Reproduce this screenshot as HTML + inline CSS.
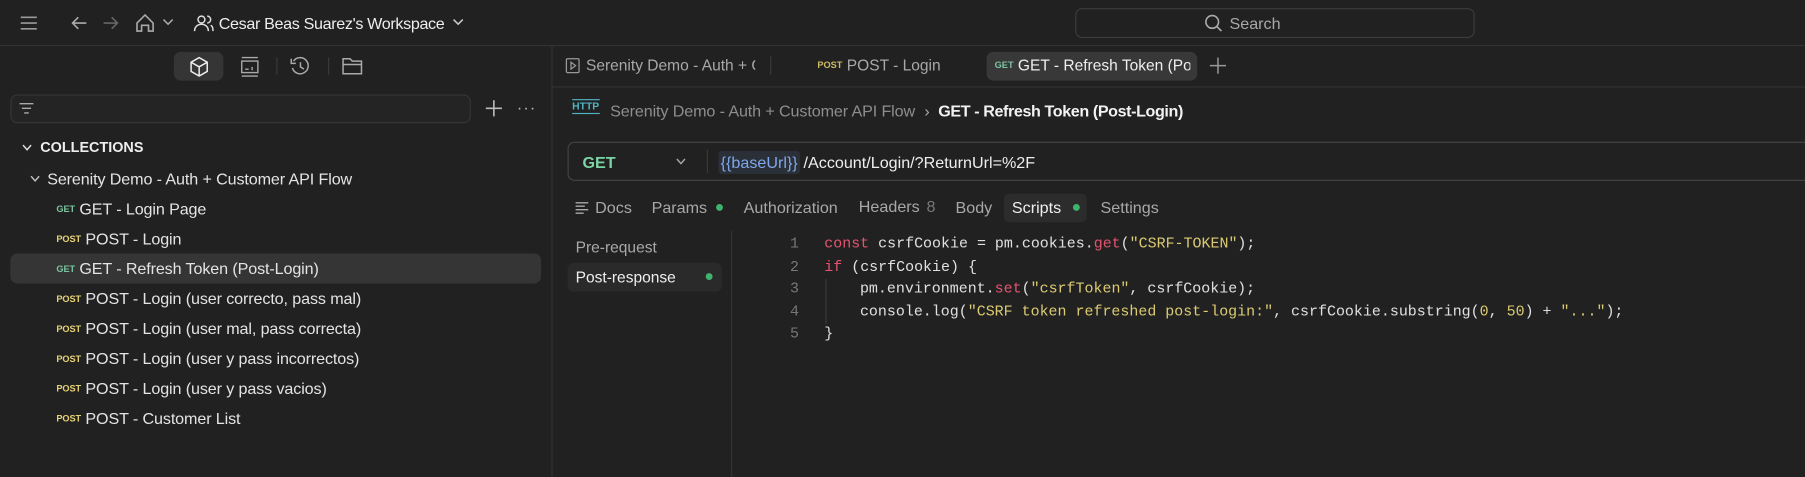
<!DOCTYPE html>
<html><head><meta charset="utf-8"><style>
*{margin:0;padding:0;box-sizing:border-box}
html,body{width:1805px;height:477px;overflow:hidden;background:#212121}
#w{width:1568px;height:414px;transform:scale(1.1512,1.1522);transform-origin:0 0;position:relative;font-family:"Liberation Sans",sans-serif;color:#e4e4e4;font-size:14px;background:#212121}
.a{position:absolute;white-space:nowrap}
.m{color:#a8a8a8}
.get{color:#7cc4a0;font-size:8px;font-weight:bold;vertical-align:2px}
.post{color:#e6d275;font-size:8px;font-weight:bold;vertical-align:2px}
.code{font-family:"Liberation Mono",monospace;font-size:13px;color:#e0e0e0}
.k{color:#e5536f}.s{color:#dccb72}.n{color:#dccb72}
.ln{color:#777;font-family:"Liberation Mono",monospace;font-size:13px;width:20px;text-align:right}
.dot{width:6px;height:6px;border-radius:50%;background:#3fb36e}
svg{position:absolute}
.it{letter-spacing:-0.1px}
</style></head><body><div id="w">
<div class="a" style="left:0;top:39px;width:1568px;height:1px;background:#333"></div>
<svg style="left:17px;top:13px" width="16" height="14" stroke="#999" stroke-width="1.4"><path d="M1 2h14M1 7h14M1 12h14"/></svg>
<svg style="left:61px;top:12px" width="16" height="16" fill="none" stroke="#aaa" stroke-width="1.4"><path d="M14 8H2M7 3L2 8l5 5"/></svg>
<svg style="left:88px;top:12px" width="16" height="16" fill="none" stroke="#666" stroke-width="1.4"><path d="M2 8h12M9 3l5 5-5 5"/></svg>
<svg style="left:117px;top:11px" width="18" height="18" fill="none" stroke="#aaa" stroke-width="1.4"><path d="M2 9L9 2l7 7v7h-4v-5H6v5H2z"/></svg>
<svg style="left:141px;top:15px" width="10" height="8" fill="none" stroke="#aaa" stroke-width="1.3"><path d="M1 2l4 4 4-4"/></svg>
<svg style="left:168px;top:11px" width="18" height="18" fill="none" stroke="#ddd" stroke-width="1.3"><circle cx="7" cy="6" r="3"/><path d="M1 16c0-4 3-6 6-6s6 2 6 6M12 3a3 3 0 010 6M15 11c2 1 2 3 2 5"/></svg>
<div class="a" style="left:190px;top:12px;font-size:14px;letter-spacing:-0.3px;color:#eee">Cesar Beas Suarez's Workspace</div>
<svg style="left:393px;top:15px" width="10" height="8" fill="none" stroke="#ccc" stroke-width="1.3"><path d="M1 2l4 4 4-4"/></svg>
<div class="a" style="left:934px;top:7px;width:347px;height:26px;border:1px solid #3c3c3c;border-radius:6px"></div>
<svg style="left:1046px;top:12px" width="16" height="16" fill="none" stroke="#aaa" stroke-width="1.4"><circle cx="7" cy="7" r="5.5"/><path d="M11 11l4 4"/></svg>
<div class="a m" style="left:1068px;top:12px;font-size:14px">Search</div>
<div class="a" style="left:479px;top:40px;width:1px;height:374px;background:#333"></div>
<div class="a" style="left:151px;top:45px;width:43px;height:25px;background:#353535;border-radius:6px"></div>
<svg style="left:164px;top:49px" width="18" height="18" fill="none" stroke="#eee" stroke-width="1.3"><path d="M9 1l7 4v8l-7 4-7-4V5zM2 5l7 4 7-4M9 9v8"/></svg>
<svg style="left:208px;top:49px" width="18" height="18" fill="none" stroke="#aaa" stroke-width="1.2"><path d="M2 1h14M2 17h14"/><rect x="2" y="4" width="14" height="10"/><path d="M5 11h3M11 9v3"/></svg>
<div class="a" style="left:240px;top:50px;width:1px;height:15px;background:#3a3a3a"></div>
<svg style="left:252px;top:49px" width="18" height="18" fill="none" stroke="#aaa" stroke-width="1.3"><path d="M3 4a7 7 0 11-1 6M1 2v4h4M9 5v4l3 2"/></svg>
<div class="a" style="left:285px;top:50px;width:1px;height:15px;background:#3a3a3a"></div>
<svg style="left:297px;top:49px" width="18" height="16" fill="none" stroke="#aaa" stroke-width="1.3"><path d="M1 2h6l2 2h8v11H1zM1 7h16"/></svg>
<div class="a" style="left:9px;top:82px;width:400px;height:25px;border:1px solid #363636;border-radius:6px;background:#242424"></div>
<svg style="left:16px;top:88px" width="14" height="12" stroke="#aaa" stroke-width="1.2"><path d="M1 2h12M3 6h8M5 10h4"/></svg>
<svg style="left:421px;top:86px" width="16" height="16" stroke="#bbb" stroke-width="1.4"><path d="M8 1v14M1 8h14"/></svg>
<div class="a" style="left:449px;top:85px;color:#bbb;font-size:14px;letter-spacing:1px">···</div>
<svg style="left:19px;top:125px" width="9" height="7" fill="none" stroke="#ddd" stroke-width="1.3"><path d="M1 1l3.5 4L8 1"/></svg>
<div class="a" style="left:35px;top:121px;font-size:12.5px;font-weight:bold;color:#eee">COLLECTIONS</div>
<svg style="left:26px;top:152px" width="9" height="7" fill="none" stroke="#bbb" stroke-width="1.3"><path d="M1 1l3.5 4L8 1"/></svg>
<div class="a it" style="left:41px;top:147px">Serenity Demo - Auth + Customer API Flow</div>
<div class="a" style="left:9px;top:220px;width:461px;height:26px;background:#353535;border-radius:6px"></div>
<div class="a it" style="left:49px;top:173px"><span class="get">GET</span> GET - Login Page</div>
<div class="a it" style="left:49px;top:199px"><span class="post">POST</span> POST - Login</div>
<div class="a it" style="left:49px;top:225px"><span class="get">GET</span> GET - Refresh Token (Post-Login)</div>
<div class="a it" style="left:49px;top:251px"><span class="post">POST</span> POST - Login (user correcto, pass mal)</div>
<div class="a it" style="left:49px;top:277px"><span class="post">POST</span> POST - Login (user mal, pass correcta)</div>
<div class="a it" style="left:49px;top:303px"><span class="post">POST</span> POST - Login (user y pass incorrectos)</div>
<div class="a it" style="left:49px;top:329px"><span class="post">POST</span> POST - Login (user y pass vacios)</div>
<div class="a it" style="left:49px;top:355px"><span class="post">POST</span> POST - Customer List</div>
<div class="a" style="left:480px;top:75px;width:1088px;height:1px;background:#333"></div>
<svg style="left:491px;top:50px" width="13" height="14" fill="none" stroke="#999" stroke-width="1.1"><rect x="1" y="1" width="11" height="12" rx="1"/><path d="M5 4l4 3-4 3z"/></svg>
<div class="a m" style="left:509px;top:49px;width:147px;overflow:hidden;font-size:13.5px">Serenity Demo - Auth + Customer</div>
<div class="a" style="left:669px;top:49px;width:1px;height:16px;background:#3a3a3a"></div>
<div class="a m" style="left:710px;top:49px;font-size:13.5px"><span class="post" style="color:#cdbb66">POST</span> POST - Login</div>
<div class="a" style="left:857px;top:45px;width:183px;height:25px;background:#383838;border-radius:6px"></div>
<div class="a" style="left:864px;top:49px;width:170px;overflow:hidden;font-size:13.5px;color:#eee"><span class="get">GET</span> GET - Refresh Token (Post-Login)</div>
<svg style="left:1050px;top:49px" width="16" height="16" stroke="#999" stroke-width="1.3"><path d="M8 1v14M1 8h14"/></svg>
<div class="a" style="left:497px;top:86px;font-size:9px;color:#4fb3c3;font-weight:bold;border-top:1.5px solid #4fb3c3;border-bottom:1.5px solid #4fb3c3;line-height:11px">HTTP</div>
<div class="a" style="left:530px;top:88px;color:#8e8e8e;letter-spacing:-0.1px">Serenity Demo - Auth + Customer API Flow</div>
<div class="a" style="left:803px;top:88px;color:#aaa">›</div>
<div class="a" style="left:815px;top:88px;font-weight:bold;color:#f2f2f2;letter-spacing:-0.35px">GET - Refresh Token (Post-Login)</div>
<div class="a" style="left:493px;top:123px;width:1090px;height:34px;border:1px solid #444;border-radius:6px"></div>
<div class="a" style="left:506px;top:133px;color:#7cd4a4;font-weight:bold;font-size:14px">GET</div>
<svg style="left:587px;top:137px" width="9" height="7" fill="none" stroke="#aaa" stroke-width="1.2"><path d="M1 1l3.5 4L8 1"/></svg>
<div class="a" style="left:614px;top:130px;width:1px;height:20px;background:#3a3a3a"></div>
<div class="a" style="left:624px;top:131px;height:20px;padding:0 2px;background:#2a2f38;border-radius:3px;color:#7fa8e8;line-height:20px">{{baseUrl}}</div>
<div class="a" style="left:698px;top:133px;color:#eee">/Account/Login/?ReturnUrl=%2F</div>
<svg style="left:499px;top:174px" width="13" height="13" stroke="#aaa" stroke-width="1.2"><path d="M1 2h11M1 5h8M1 8h11M1 11h7"/></svg>
<div class="a m" style="left:517px;top:172px">Docs</div>
<div class="a m" style="left:566px;top:172px">Params</div><div class="a dot" style="left:622px;top:177px"></div>
<div class="a m" style="left:646px;top:172px">Authorization</div>
<div class="a m" style="left:746px;top:171px">Headers <span style="color:#777;margin-left:2px">8</span></div>
<div class="a m" style="left:830px;top:172px">Body</div>
<div class="a" style="left:872px;top:168px;width:72px;height:25px;background:#2c2c2c;border-radius:5px"></div>
<div class="a" style="left:879px;top:172px;color:#eee">Scripts</div><div class="a dot" style="left:932px;top:177px"></div>
<div class="a m" style="left:956px;top:172px">Settings</div>
<div class="a m" style="left:500px;top:207px;font-size:13.5px">Pre-request</div>
<div class="a" style="left:493px;top:228px;width:134px;height:25px;background:#2a2a2a;border-radius:5px"></div>
<div class="a" style="left:500px;top:233px;font-size:13.5px;color:#eee">Post-response</div><div class="a dot" style="left:613px;top:237px"></div>
<div class="a" style="left:635px;top:200px;width:1px;height:214px;background:#333"></div>
<div class="a ln" style="left:674px;top:204px">1</div>
<div class="a ln" style="left:674px;top:224px">2</div>
<div class="a ln" style="left:674px;top:243px">3</div>
<div class="a ln" style="left:674px;top:263px">4</div>
<div class="a ln" style="left:674px;top:282px">5</div>
<div class="a" style="left:717px;top:242px;width:1px;height:39px;background:#3a3a3a"></div>
<div class="a code" style="left:716px;top:204px"><span class="k">const</span> csrfCookie = pm.cookies.<span class="k">get</span>(<span class="s">"CSRF-TOKEN"</span>);</div>
<div class="a code" style="left:716px;top:224px"><span class="k">if</span> (csrfCookie) {</div>
<div class="a code" style="left:747px;top:243px">pm.environment.<span class="k">set</span>(<span class="s">"csrfToken"</span>, csrfCookie);</div>
<div class="a code" style="left:747px;top:263px">console.log(<span class="s">"CSRF token refreshed post-login:"</span>, csrfCookie.substring(<span class="n">0</span>, <span class="n">50</span>) + <span class="s">"..."</span>);</div>
<div class="a code" style="left:716px;top:282px">}</div>
</div></body></html>
